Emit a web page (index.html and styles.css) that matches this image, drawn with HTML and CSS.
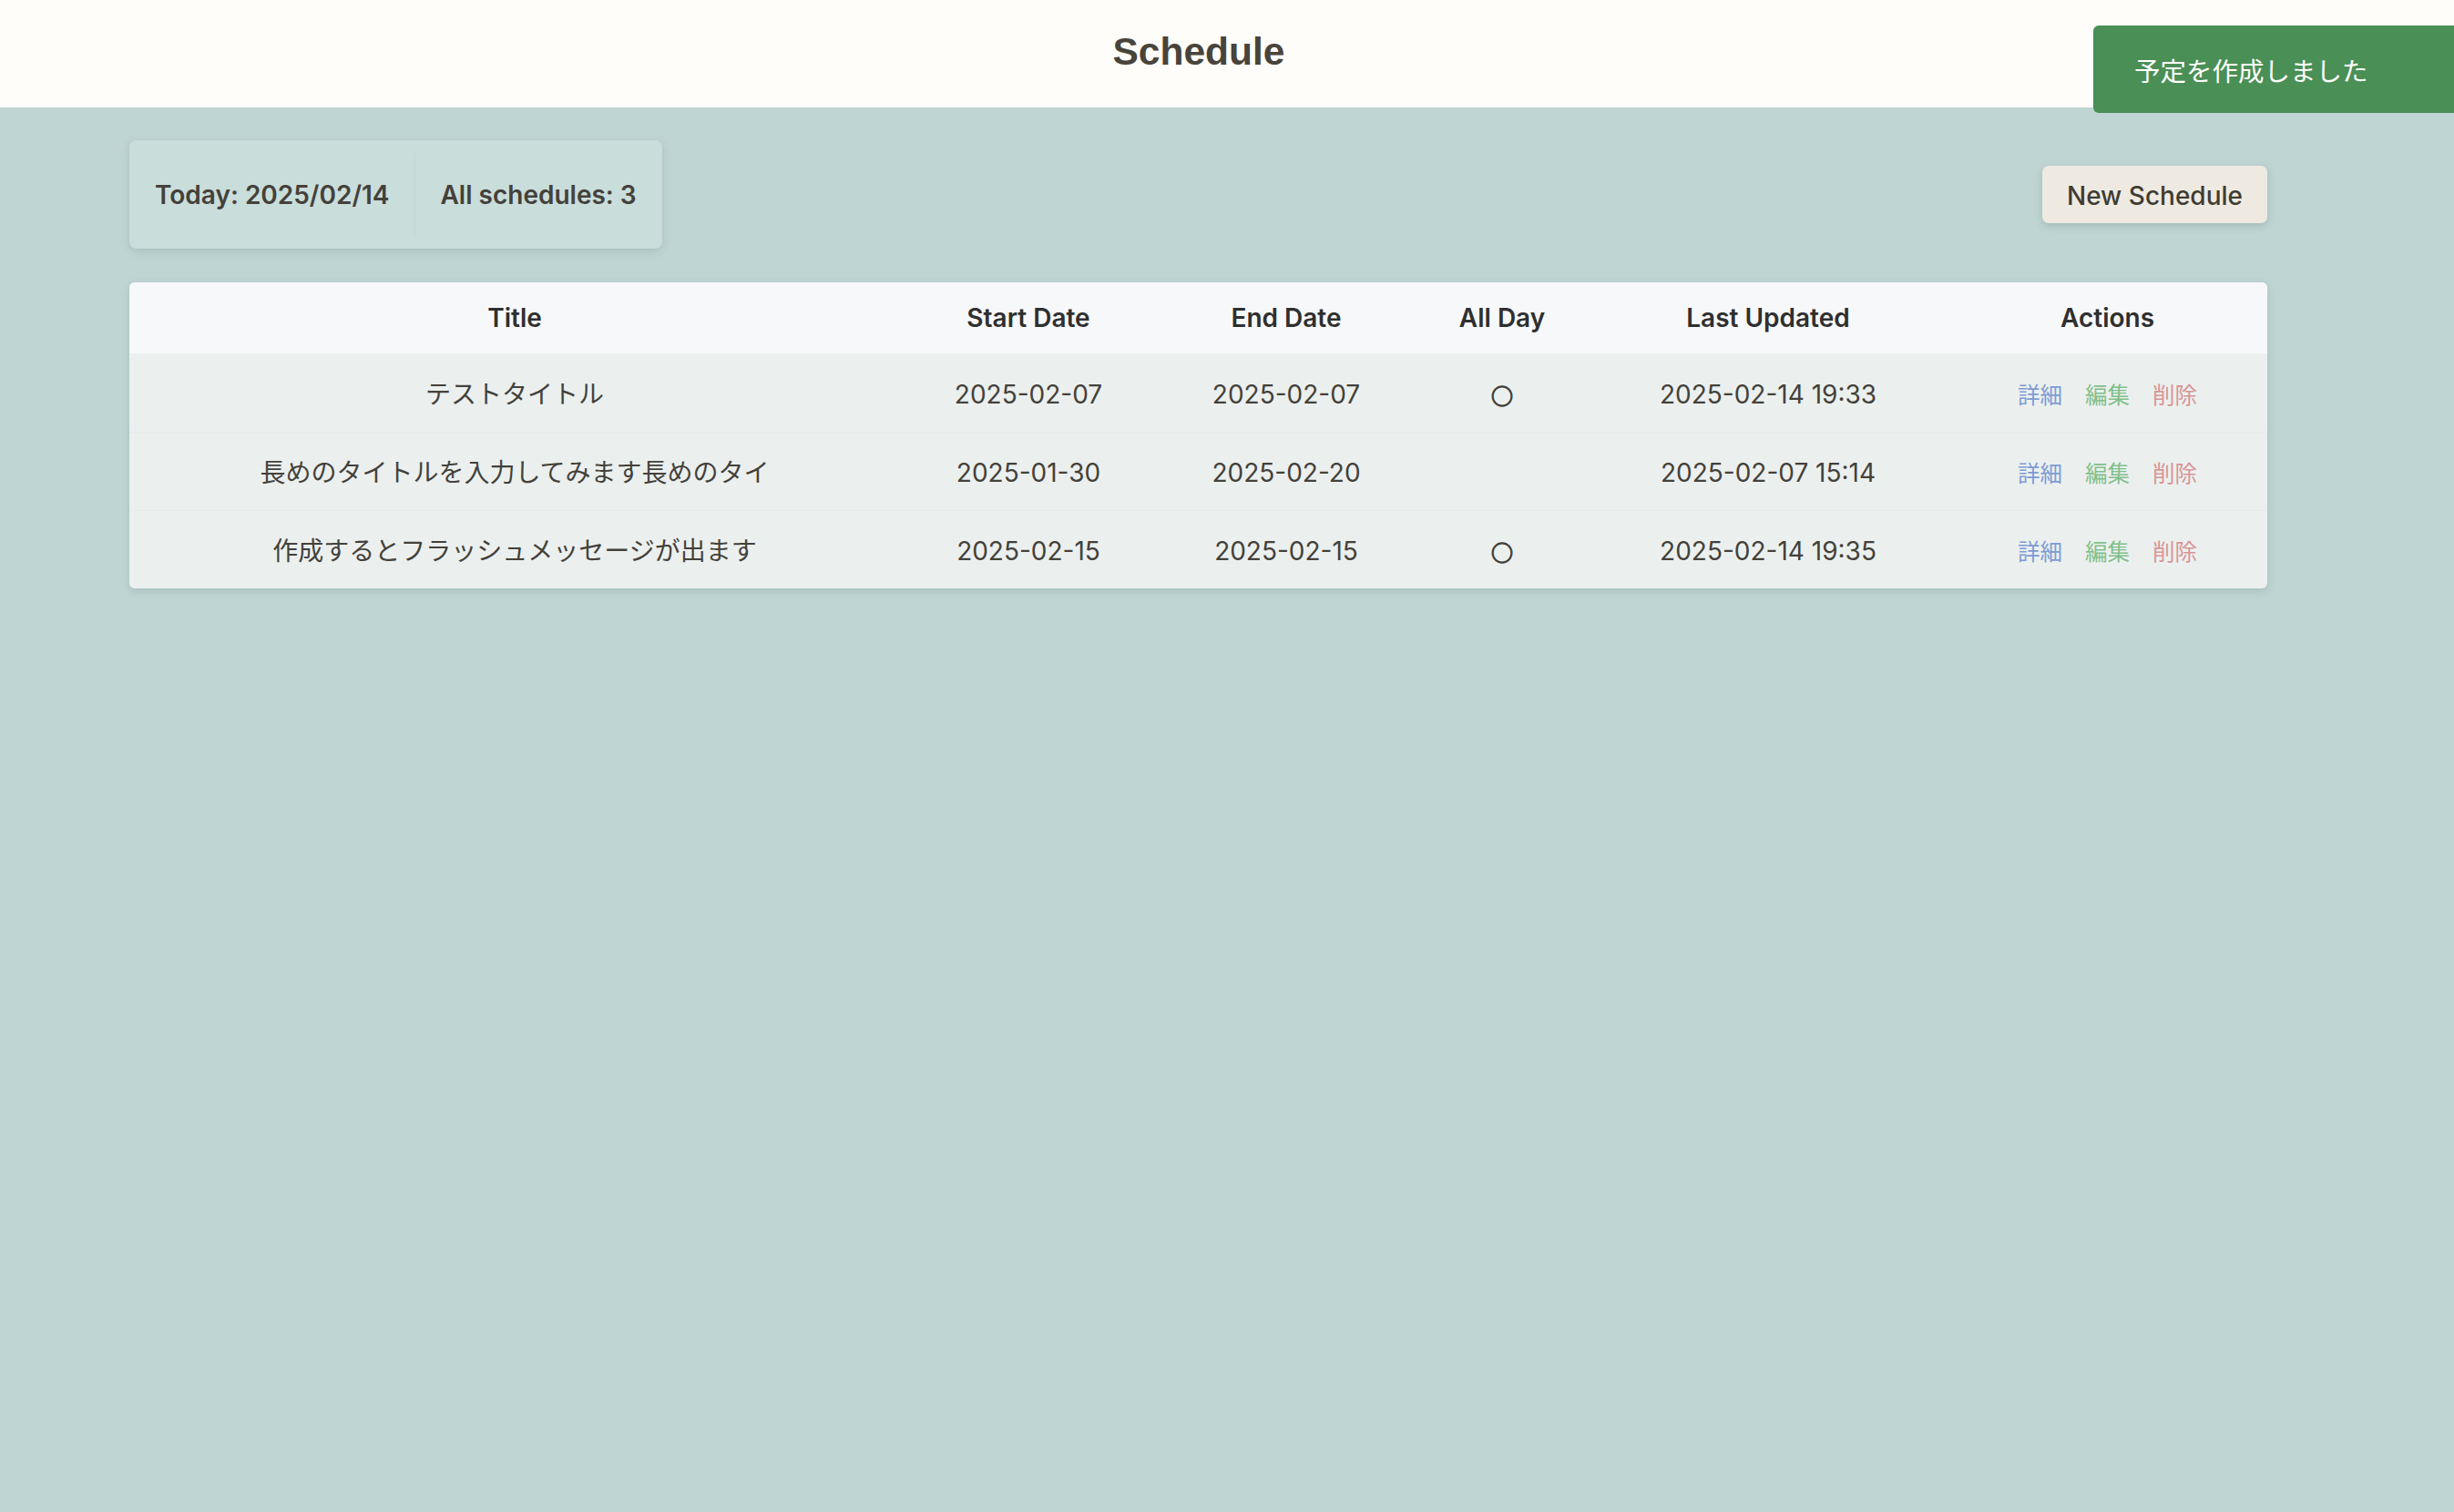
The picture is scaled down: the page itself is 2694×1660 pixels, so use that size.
FILE: index.html
```html
<!DOCTYPE html>
<html lang="ja">
<head>
<meta charset="utf-8">
<title>Schedule</title>
<link rel="stylesheet" href="styles.css">
</head>
<body>
<header class="site-header">
  <h1 class="site-title">Schedule</h1>
</header>
<div class="toast">予定を作成しました</div>
<main class="main">
  <div class="toolbar">
    <div class="stats">
      <div class="stat">Today: 2025/02/14</div>
      <div class="stat stat-divided">All schedules: 3</div>
    </div>
    <button class="btn-new">New Schedule</button>
  </div>
  <table class="schedule-table">
    <colgroup>
      <col class="col-title">
      <col class="col-start">
      <col class="col-end">
      <col class="col-allday">
      <col class="col-updated">
      <col class="col-actions">
    </colgroup>
    <thead>
      <tr>
        <th>Title</th>
        <th>Start Date</th>
        <th>End Date</th>
        <th>All Day</th>
        <th>Last Updated</th>
        <th>Actions</th>
      </tr>
    </thead>
    <tbody>
      <tr>
        <td>テストタイトル</td>
        <td>2025-02-07</td>
        <td>2025-02-07</td>
        <td><span class="allday">○</span></td>
        <td>2025-02-14 19:33</td>
        <td><span class="actions"><a class="act act-show">詳細</a><a class="act act-edit">編集</a><a class="act act-delete">削除</a></span></td>
      </tr>
      <tr>
        <td>長めのタイトルを入力してみます長めのタイ</td>
        <td>2025-01-30</td>
        <td>2025-02-20</td>
        <td></td>
        <td>2025-02-07 15:14</td>
        <td><span class="actions"><a class="act act-show">詳細</a><a class="act act-edit">編集</a><a class="act act-delete">削除</a></span></td>
      </tr>
      <tr>
        <td>作成するとフラッシュメッセージが出ます</td>
        <td>2025-02-15</td>
        <td>2025-02-15</td>
        <td><span class="allday">○</span></td>
        <td>2025-02-14 19:35</td>
        <td><span class="actions"><a class="act act-show">詳細</a><a class="act act-edit">編集</a><a class="act act-delete">削除</a></span></td>
      </tr>
    </tbody>
  </table>
</main>
</body>
</html>
```
FILE: styles.css
```css
html, body {
  margin: 0;
  padding: 0;
}
body {
  background: #bfd5d3;
  color: #44413a;
  font-family: "Inter", "Noto Sans CJK JP", sans-serif;
  font-size: 28px;
  min-height: 1660px;
}
.site-header {
  background: #fffdf9;
  height: 118px;
  display: flex;
  align-items: center;
  justify-content: center;
  padding-right: 62px;
}
.site-title {
  margin: 0;
  font-family: "Liberation Sans", Arial, sans-serif;
  font-weight: 700;
  font-size: 42.5px;
  line-height: 48px;
  color: #48443a;
  padding-bottom: 4px;
}
.toast {
  position: fixed;
  top: 28px;
  right: 0;
  width: 351px;
  height: 96px;
  padding-left: 45px;
  box-sizing: content-box;
  background: #4a8f55;
  color: #ffffff;
  border-radius: 6px 0 0 6px;
  display: flex;
  align-items: center;
  font-size: 28.5px;
  font-family: "Noto Sans CJK JP", sans-serif;
  font-weight: 400;
}
.main {
  padding: 36px 205px 0 142px;
}
.toolbar {
  display: flex;
  align-items: center;
  justify-content: space-between;
  margin-bottom: 37px;
}
.stats {
  display: flex;
  background: #c9dddb;
  border-radius: 8px;
  padding: 14px 0;
  box-shadow: 0 3px 10px rgba(60, 100, 95, 0.18);
}
.stat {
  padding: 26px 28px 24px;
  line-height: 41px;
  font-weight: 600;
  color: #44413a;
}
.stat-divided {
  border-left: 1px solid #c2d6d3;
  padding-left: 27px;
  padding-right: 28px;
}
.btn-new {
  font-family: "Inter", sans-serif;
  font-size: 28px;
  font-weight: 500;
  color: #3f3c33;
  background: #eeeae2;
  border: none;
  border-radius: 7px;
  height: 63px;
  padding: 2px 27px 0;
  box-shadow: 0 3px 8px rgba(60, 100, 95, 0.22);
}
.schedule-table {
  width: 2347px;
  table-layout: fixed;
  border-collapse: separate;
  border-spacing: 0;
  background: #ebf0ef;
  border-radius: 6px;
  overflow: hidden;
  box-shadow: 0 3px 10px rgba(60, 100, 95, 0.18);
}
.col-title { width: 846px; }
.col-start { width: 282px; }
.col-end { width: 284px; }
.col-allday { width: 190px; }
.col-updated { width: 394px; }
.col-actions { width: 351px; }
.schedule-table th {
  background: #f7f8fa;
  color: #2f2f2f;
  font-weight: 600;
  line-height: 40px;
  height: 40px;
  padding: 19px 0;
  text-align: center;
}
.schedule-table td {
  line-height: 40px;
  height: 40px;
  padding: 25px 0 21px;
  text-align: center;
  color: #44413a;
  white-space: nowrap;
  overflow: hidden;
}
.schedule-table tbody tr + tr td {
  border-top: 1px solid #e5ecea;
  padding-top: 24px;
}
.allday {
  display: inline-block;
  vertical-align: top;
  height: 40px;
  line-height: 42px;
  font-size: 24px;
  font-weight: 400;
  font-family: "Noto Sans CJK JP", sans-serif;
  color: #44413a;
  -webkit-text-stroke: 1.3px #44413a;
}
.actions {
  display: inline-flex;
  vertical-align: top;
  align-items: center;
  height: 40px;
  line-height: 40px;
  gap: 25px;
  font-size: 24.5px;
  font-family: "Noto Sans CJK JP", sans-serif;
}
.act {
  text-decoration: none;
  cursor: pointer;
}
.act-show { color: #7f9bd4; }
.act-edit { color: #82bf8a; }
.act-delete { color: #d99494; }
```
